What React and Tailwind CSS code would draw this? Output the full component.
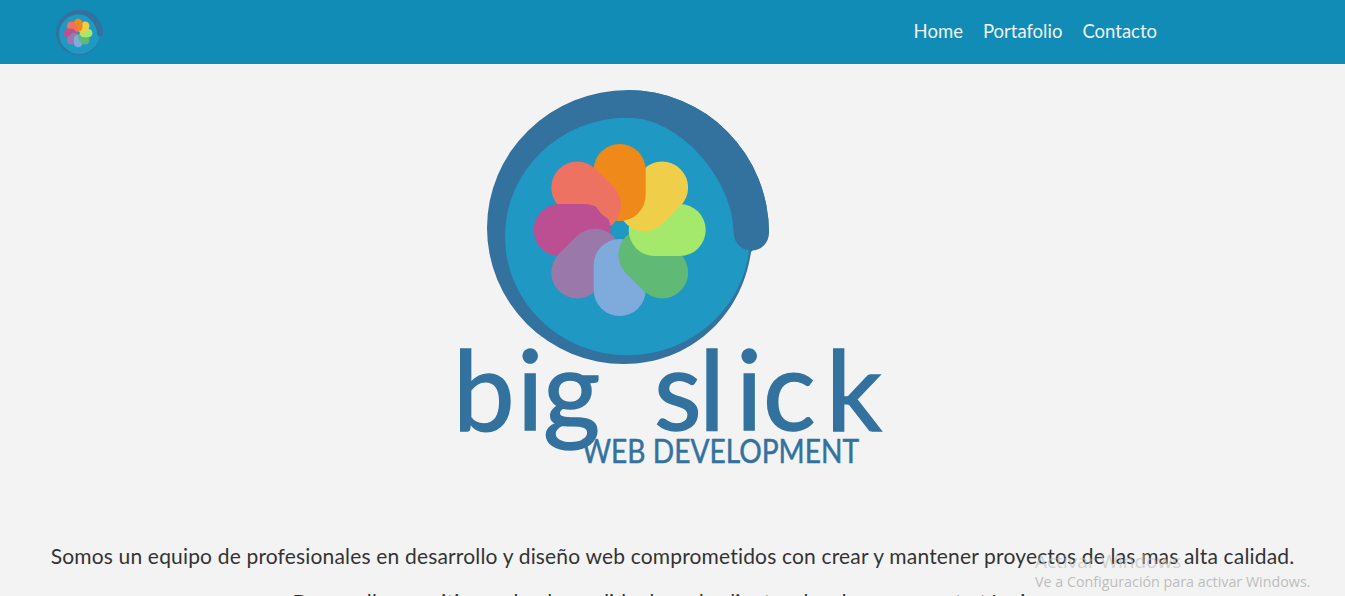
const petals = [
  { angle: -45, color: '#ee7262' },
  { angle: -90, color: '#bc4f91' },
  { angle: -135, color: '#9a78a9' },
  { angle: 180, color: '#7faadc' },
  { angle: 135, color: '#61b976' },
  { angle: 90, color: '#a4e96b' },
  { angle: 45, color: '#efcf4a' },
  { angle: 0, color: '#ef8a1a' },
]

function Petal({ angle, color }) {
  return <rect x="-26" y="-86" width="52" height="77" rx="26" fill={color} transform={`rotate(${angle})`} />
}

// the flower overlaps in a ring, so the salmon petal is drawn again on top of the orange one
function Mark({ id, ...props }) {
  return (
    <svg viewBox="487 90 282 274" {...props}>
      <path d="M769 233A141 143 0 0 0 628 90A141 138 0 0 0 487 228A137 136 0 0 0 624 364C690 364 742 316 751 252Z" fill="#33729f" />
      <ellipse cx="627.5" cy="236.5" rx="122.5" ry="118.8" fill="#1f98c3" />
      <path d="M769 233A141 143 0 0 0 628 90L627 117.5C680 117.5 733.7 180 733.7 233Z" fill="#33729f" />
      <circle cx="751.4" cy="233" r="17.6" fill="#33729f" />
      <g transform="translate(619.7 230)">
        <clipPath id={id}>
          <rect x="-26" y="-86" width="52" height="77" rx="26" />
        </clipPath>
        {petals.map((p) => <Petal key={p.angle} {...p} />)}
        <g clipPath={`url(#${id})`}>
          <Petal {...petals[0]} />
        </g>
        <circle r="8.5" fill="#1f98c3" />
      </g>
    </svg>
  )
}

export default function App() {
  return (
    <div className="relative h-screen overflow-hidden bg-[#f3f3f3] font-['Lato',sans-serif]">
      <header className="flex h-16 items-center justify-between bg-[#108cb7] pl-[56px] pr-[188px]">
        <Mark id="petal-small" className="h-[47px] w-[47px]" />
        <nav className="flex gap-5 text-[18.5px] text-[#f2f2f2]">
          <a href="#home">Home</a>
          <a href="#portafolio">Portafolio</a>
          <a href="#contacto">Contacto</a>
        </nav>
      </header>
      <main className="flex flex-col items-center">
        <svg viewBox="440 64 470 420" className="ml-[5px] h-[420px] w-[470px]">
          <Mark id="petal-big" x="487" y="90" width="282" height="274" />
          <text x="453 517 543 600 654 699 736 763 826" y="430" fontFamily="Lato, sans-serif" fontSize="110" stroke="#33729f" strokeWidth="1.5" fill="#33729f">big slick</text>
          <text x="582" y="463" fontFamily="Lato, sans-serif" fontSize="32" stroke="#33729f" strokeWidth="0.5" fill="#33729f" textLength="277" lengthAdjust="spacingAndGlyphs">WEB DEVELOPMENT</text>
        </svg>
        <p className="mt-[58px] text-center text-[21px] leading-[28px] tracking-[0.17px] text-[#333333]">
          Somos un equipo de profesionales en desarrollo y diseño web comprometidos con crear y mantener proyectos de las mas alta calidad.
        </p>
        <p className="mt-[18px] text-center text-[21px] leading-[28px] tracking-[0.17px] text-[#333333]">
          Desarrollamos sitios web a la medida de cada cliente y les damos soporte técnico.
        </p>
      </main>
      <div className="absolute left-[1035px] top-[548px] font-['Open_Sans',sans-serif] text-[#bdbdbd]">
        <div className="text-[19px] leading-[26px] opacity-60">Activar Windows</div>
        <div className="-mt-[2px] text-[14.3px] leading-[20px]">Ve a Configuración para activar Windows.</div>
      </div>
    </div>
  )
}
